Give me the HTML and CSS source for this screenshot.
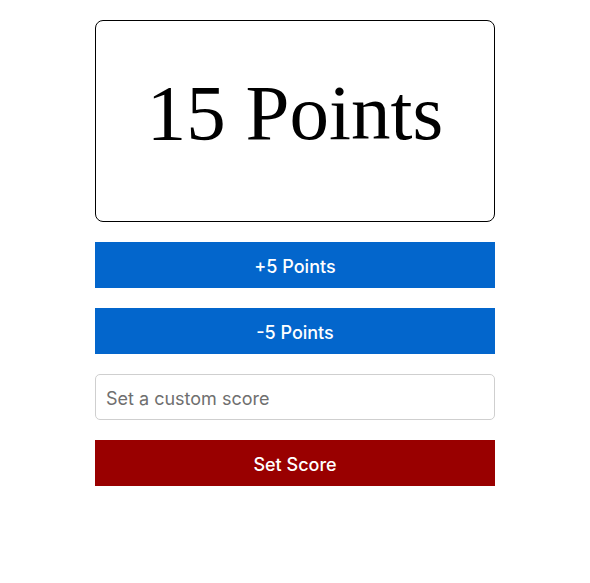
FILE: index.html
```html
<!DOCTYPE html>
<html>
<head>
<meta charset="utf-8">
<link rel="stylesheet" href="styles.css">
</head>
<body>
<div class="wrap">
  <div class="score">15 Points</div>
  <button class="btn blue">+5 Points</button>
  <button class="btn blue">-5 Points</button>
  <input class="field" type="text" placeholder="Set a custom score">
  <button class="btn red">Set Score</button>
</div>
</body>
</html>
```
FILE: styles.css
```css
html, body { margin: 0; padding: 0; background: #fff; }
.wrap {
  width: 400px;
  margin: 20px 0 0 95px;
  display: flex;
  flex-direction: column;
  gap: 20px;
}
.score {
  box-sizing: border-box;
  height: 202px;
  padding-bottom: 16px;
  border: 1px solid #000;
  border-radius: 8px;
  display: flex;
  align-items: center;
  justify-content: center;
  font-family: "Liberation Serif", "Times New Roman", serif;
  font-size: 79px;
  color: #000;
}
.btn {
  height: 46px;
  border: none;
  margin: 0;
  padding: 0;
  padding-top: 2px;
  color: #fff;
  font-family: Inter, "Liberation Sans", sans-serif;
  font-size: 18px;
  font-weight: 500;
  cursor: pointer;
}
.blue { background: #0366cc; }
.red { background: #990000; }
.field {
  box-sizing: border-box;
  height: 46px;
  margin: 0;
  border: 1px solid #cfcfcf;
  border-radius: 5px;
  padding: 2px 10px 0;
  font-family: Inter, "Liberation Sans", sans-serif;
  font-size: 18px;
  color: #333;
}
.field::placeholder { color: #6f6f6f; }
```
